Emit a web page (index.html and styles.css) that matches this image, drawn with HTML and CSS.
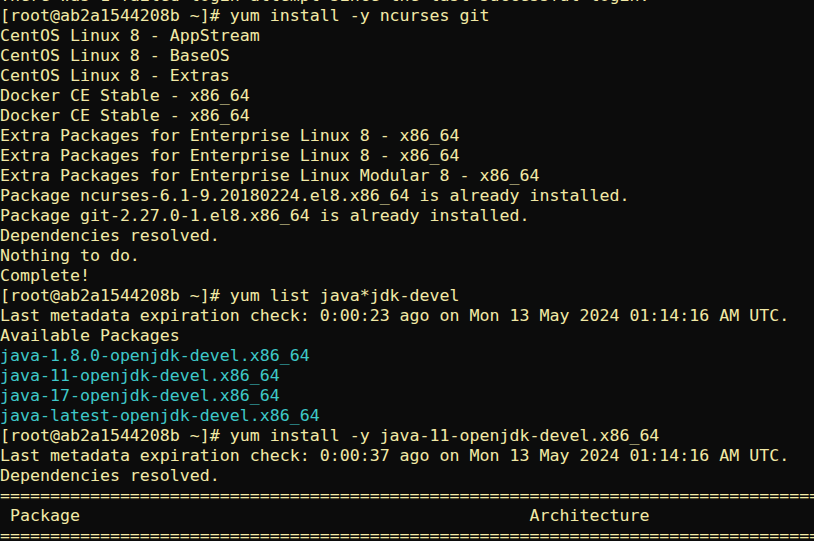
FILE: index.html
```html
<!DOCTYPE html>
<html>
<head>
<meta charset="utf-8">
<link rel="stylesheet" href="styles.css">
</head>
<body>
<pre class="term">There was 1 failed login attempt since the last successful login.
[root@ab2a1544208b ~]# yum install -y ncurses git
CentOS Linux 8 - AppStream
CentOS Linux 8 - BaseOS
CentOS Linux 8 - Extras
Docker CE Stable - x86_64
Docker CE Stable - x86_64
Extra Packages for Enterprise Linux 8 - x86_64
Extra Packages for Enterprise Linux 8 - x86_64
Extra Packages for Enterprise Linux Modular 8 - x86_64
Package ncurses-6.1-9.20180224.el8.x86_64 is already installed.
Package git-2.27.0-1.el8.x86_64 is already installed.
Dependencies resolved.
Nothing to do.
Complete!
[root@ab2a1544208b ~]# yum list java*jdk-devel
Last metadata expiration check: 0:00:23 ago on Mon 13 May 2024 01:14:16 AM UTC.
Available Packages
<span class="cyan">java-1.8.0-openjdk-devel.x86_64</span>
<span class="cyan">java-11-openjdk-devel.x86_64</span>
<span class="cyan">java-17-openjdk-devel.x86_64</span>
<span class="cyan">java-latest-openjdk-devel.x86_64</span>
[root@ab2a1544208b ~]# yum install -y java-11-openjdk-devel.x86_64
Last metadata expiration check: 0:00:37 ago on Mon 13 May 2024 01:14:16 AM UTC.
Dependencies resolved.
==================================================================================
 Package                                             Architecture
==================================================================================</pre>
</body>
</html>
```
FILE: styles.css
```css
html, body {
  margin: 0;
  padding: 0;
  background: #0c0c0c;
  height: 100%;
  overflow: hidden;
}
.term {
  margin: -14px 0 0 0;
  padding: 0;
  font-family: "DejaVu Sans Mono", monospace;
  font-size: 16.6px;
  line-height: 20px;
  color: #f2eaa6;
  white-space: pre;
  overflow: hidden;
}
.cyan {
  color: #3ec8c8;
}
```
